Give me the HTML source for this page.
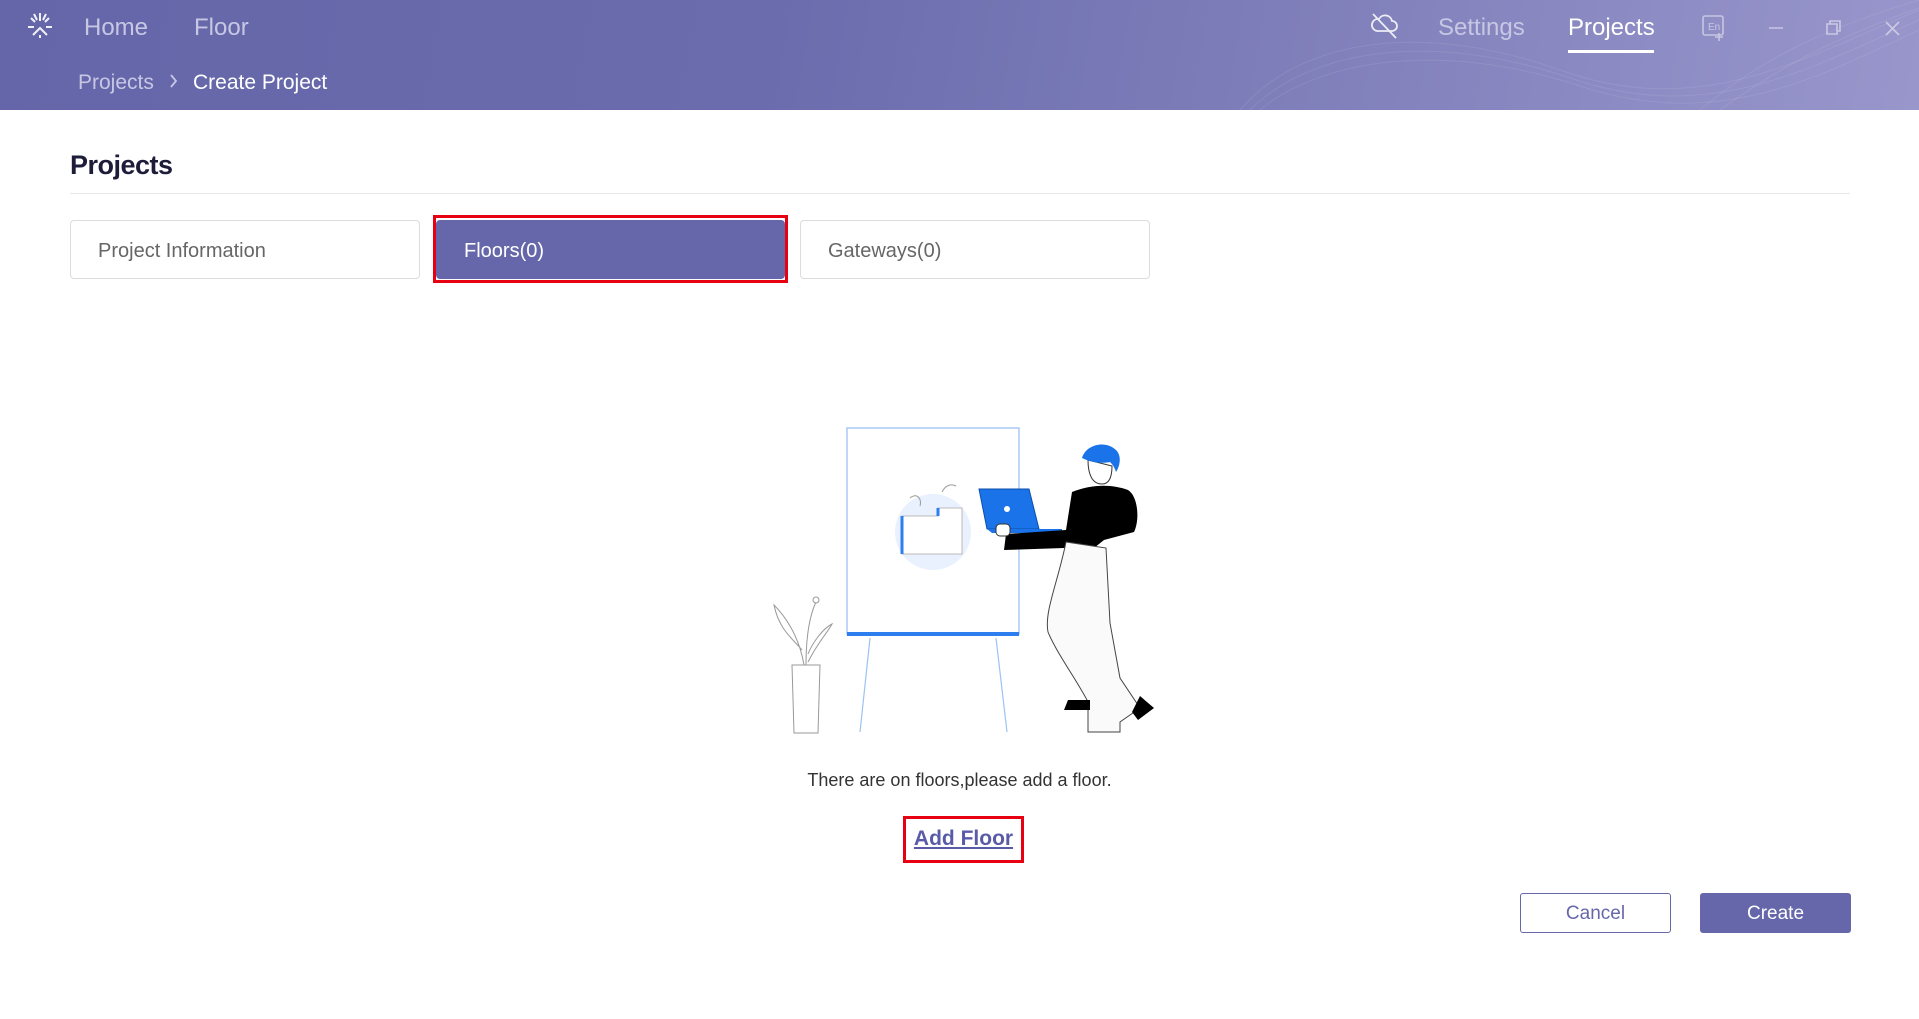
<!DOCTYPE html>
<html><head><meta charset="utf-8">
<style>
*{margin:0;padding:0;box-sizing:border-box}
body{width:1919px;height:1019px;background:#fff;font-family:"Liberation Sans",sans-serif;position:relative;overflow:hidden}
.hdr{position:absolute;left:0;top:0;width:1919px;height:110px;background:linear-gradient(100deg,#6566a9 0%,#6a6cad 40%,#8584be 75%,#9896cb 100%);overflow:hidden}
.t{position:absolute;white-space:nowrap}
.tab{position:absolute;top:220px;height:59px;border:1px solid #dcdcdc;border-radius:4px;font-size:20px;color:#666;padding-left:27px;line-height:60px}
</style></head><body>
<div class="hdr">
<svg width="1919" height="110" style="position:absolute;left:0;top:0">
<g fill="none" stroke="#fff" stroke-opacity=".09" stroke-width="1">
<path d="M1240 110 C1300 40 1420 20 1560 70 S1800 60 1919 10"/>
<path d="M1250 110 C1310 50 1430 30 1570 78 S1810 68 1919 20"/>
<path d="M1260 110 C1320 60 1440 40 1580 86 S1820 76 1919 30"/>
<path d="M1700 110 C1760 60 1820 30 1919 0"/>
<path d="M1720 110 C1780 66 1840 36 1919 8"/>
</g>
<g stroke="#fff" stroke-width="2" fill="none" opacity=".9">
<path d="M40 13 V21 M28 27 H34 M46 27 H52 M31 18 L35 22 M49 18 L45 22 M33 35 L40 28 L47 35 M40 35 V38 M34 14 L37 20 M46 14 L43 20"/>
</g>
<g stroke="#fff" stroke-width="1.8" fill="none" opacity=".85">
<path d="M1377 31 h15 a5 5 0 0 0 0 -10 a7 7 0 0 0 -13 -2 a5 5 0 0 0 -2 12z"/><path d="M1373 14 L1396 38"/>
</g>
<g stroke="#fff" stroke-width="1.6" fill="none" opacity=".5">
<rect x="1703" y="16" width="20" height="19" rx="2"/>
<path d="M1719 33 v8 M1715 37 h8"/>
<path d="M1769 28 h14 M1827 24 h10 v10 h-10z M1830 24 v-3 h10 v10 h-3 M1886 22 l13 13 M1899 22 l-13 13"/>
</g>
<text x="1708" y="30" font-size="10" fill="#fff" opacity=".5" font-family="Liberation Sans">En</text>
<path d="M171 75 l5 6 l-5 6" stroke="#c8c8e6" stroke-width="1.8" fill="none"/>
</svg>
<div class="t" style="left:84px;top:14px;font-size:24px;color:#c7c7e4">Home</div>
<div class="t" style="left:194px;top:14px;font-size:24px;color:#c7c7e4">Floor</div>
<div class="t" style="left:1438px;top:14px;font-size:24px;color:#c7c7e4">Settings</div>
<div class="t" style="left:1568px;top:14px;font-size:24px;color:#fff">Projects</div>
<div style="position:absolute;left:1568px;top:50px;width:86px;height:3px;background:#fff"></div>
<div class="t" style="left:78px;top:71px;font-size:21px;color:#c7c7e4">Projects</div>
<div class="t" style="left:193px;top:71px;font-size:21px;color:#fff">Create Project</div>
</div>

<div class="t" style="left:70px;top:150px;font-size:27px;color:#1d1d3a;font-weight:bold;letter-spacing:-0.5px">Projects</div>
<div style="position:absolute;left:70px;top:193px;width:1780px;height:1px;background:#e8e8e8"></div>

<div class="tab" style="left:70px;width:350px">Project Information</div>
<div style="position:absolute;left:433px;top:215px;width:355px;height:68px;border:3px solid #e60012"></div>
<div class="tab" style="left:436px;width:349px;background:#6667aa;border-color:#6667aa;color:#fff">Floors(0)</div>
<div class="tab" style="left:800px;width:350px">Gateways(0)</div>

<svg width="420" height="340" style="position:absolute;left:750px;top:400px">
<rect x="97" y="28" width="172" height="206" fill="#fff" stroke="#a8c8f5" stroke-width="1.5"/>
<rect x="97" y="232" width="172" height="4" fill="#2d7ff0"/>
<path d="M120 238 L110 332 M246 238 L257 332" stroke="#9cc3f5" stroke-width="1.2"/>
<circle cx="183" cy="132" r="38" fill="#e8f1fd"/>
<path d="M152 116 h36 v-8 h24 v46 h-60z" fill="#fff" stroke="#bbb" stroke-width="1"/>
<path d="M152 116 v38" stroke="#2d7ff0" stroke-width="3"/>
<path d="M188 108 v8" stroke="#2d7ff0" stroke-width="3"/>
<path d="M160 98 c8-6 12 2 10 8 M192 92 c4-8 10-8 14-6" stroke="#999" fill="none"/>
<path d="M42 265 h28 l-2 68 h-24z" fill="#fff" stroke="#999"/>
<path d="M56 265 c0-30 4-50 10-63 M54 265 c-5-30-20-50-30-60 c5 25 20 35 28 45 M58 262 c10-20 20-30 24-38 c-10 5-20 20-24 30" stroke="#999" fill="none"/>
<circle cx="66" cy="200" r="3" fill="#fff" stroke="#999"/>
<path d="M229 89 h50 l10 40 h-52z" fill="#1a73e8" stroke="#0c4fa8"/>
<circle cx="257" cy="109" r="3" fill="#fff"/>
<path d="M237 129 h75 v4 h-70z" fill="#1a73e8"/>
<path d="M338 60 c0 14 4 24 14 24 c8 0 10-8 10-18 z" fill="#fff" stroke="#333"/>
<path d="M332 58 c4-14 24-18 34-8 c6 6 4 16 0 22 c-2-6-4-8-6-10 c-10 2-20 0-28-4z" fill="#1a73e8"/>
<path d="M322 92 c20-8 40-8 56-2 c10 6 12 30 6 42 l-30 8 l-10 8 h-30 l-60 2 l2-16 l60-4 z" fill="#000"/>
<path d="M316 142 c-8 40-22 70-18 90 c8 20 30 50 40 70 v30 h32 v-10 l20-14 l-20-30 l-10-55 l-4-75z" fill="#fafafa" stroke="#444"/>
<path d="M340 300 h-22 l-4 10 h26z M390 296 l14 12 l-16 12 l-6-8z" fill="#000"/>
<rect x="246" y="124" width="14" height="12" rx="4" fill="#fff" stroke="#333"/>
</svg>

<div class="t" style="left:0;width:1919px;text-align:center;top:770px;font-size:18px;color:#333">There are on floors,please add a floor.</div>
<div style="position:absolute;left:903px;top:816px;width:121px;height:47px;border:3px solid #e60012"></div>
<div class="t" style="left:903px;width:121px;text-align:center;top:827px;font-size:21px;color:#5a5ba8;text-decoration:underline;font-weight:bold">Add Floor</div>

<div style="position:absolute;left:1520px;top:893px;width:151px;height:40px;border:1px solid #6667aa;border-radius:3px;color:#6667aa;font-size:19px;text-align:center;line-height:39px">Cancel</div>
<div style="position:absolute;left:1700px;top:893px;width:151px;height:40px;background:#6667aa;border-radius:3px;color:#fff;font-size:19px;text-align:center;line-height:41px">Create</div>
</body></html>
